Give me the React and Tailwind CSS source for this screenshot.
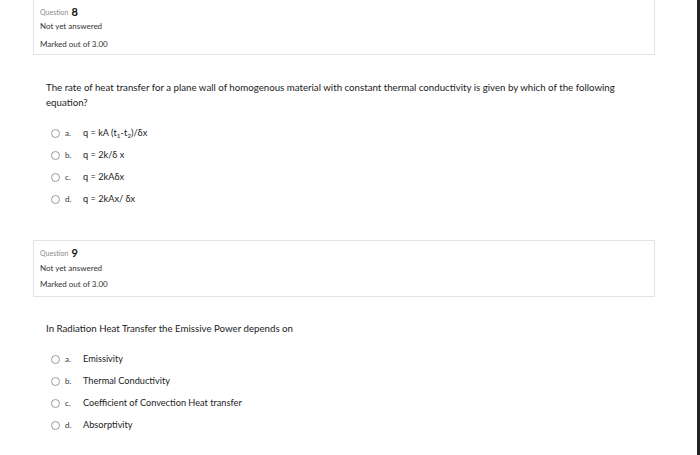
import React from "react";

const Radio = () => (
  <span className="inline-block w-[9px] h-[9px] rounded-full border border-[#9a9a9a] bg-white shrink-0" />
);

const Option = ({ letter, children }) => (
  <div className="h-[22px] flex items-center pl-[51px]">
    <Radio />
    <span className="ml-[5px] w-[18px] text-[8px] text-[#333]">{letter}</span>
    <span className="text-[9.2px] text-[#222]">{children}</span>
  </div>
);

const InfoBox = ({ num, top }) => (
  <div
    className={
      "w-[622px] border-[#e3e3e3] bg-white pl-[6px] " +
      (top ? "h-[55px] border-l border-r border-b" : "h-[57px] border")
    }
  >
    <div className="pt-[5px] h-[19px] flex items-end leading-[14px]">
      <span className="text-[7px] text-[#8a8a8a] mr-[3px]">Question</span>
      <span className="text-[11px] font-bold text-[#111]">{num}</span>
    </div>
    <div className={"h-[14px] leading-[14px] text-[8px] text-[#333] " + (top ? "" : "mt-[1px]")}>
      Not yet answered
    </div>
    <div className={"h-[14px] leading-[14px] text-[8px] text-[#333] " + (top ? "mt-[4px]" : "mt-[2px]")}>
      Marked out of 3.00
    </div>
  </div>
);

export default function App() {
  return (
    <div className="w-[700px] h-[455px] flex bg-white overflow-hidden" style={{ fontFamily: "Lato, 'Open Sans', sans-serif" }}>
      <div className="flex-1 pl-[33px]">
        <InfoBox num="8" top />

        <p className="mt-[25px] pl-[13px] w-[610px] text-[9.7px] leading-[15px] text-[#222]">
          The rate of heat transfer for a plane wall of homogenous material with constant thermal conductivity is given by which of the following equation?
        </p>
        <div className="mt-[12px] -ml-[33px]">
          <Option letter="a.">
            q = kA (t<sub className="text-[6.5px]">1</sub>-t<sub className="text-[6.5px]">2</sub>)/δx
          </Option>
          <Option letter="b.">q = 2k/δ x</Option>
          <Option letter="c.">q = 2kAδx</Option>
          <Option letter="d.">q = 2kAx/ δx</Option>
        </div>

        <div className="mt-[30px]">
          <InfoBox num="9" />
        </div>

        <p className="mt-[24px] pl-[13px] text-[9.7px] leading-[15px] text-[#222]">
          In Radiation Heat Transfer the Emissive Power depends on
        </p>
        <div className="mt-[12px] -ml-[33px]">
          <Option letter="a.">Emissivity</Option>
          <Option letter="b.">Thermal Conductivity</Option>
          <Option letter="c.">Coefficient of Convection Heat transfer</Option>
          <Option letter="d.">Absorptivity</Option>
        </div>
      </div>
      <div className="w-[3px] h-full bg-[#232323]" />
    </div>
  );
}
